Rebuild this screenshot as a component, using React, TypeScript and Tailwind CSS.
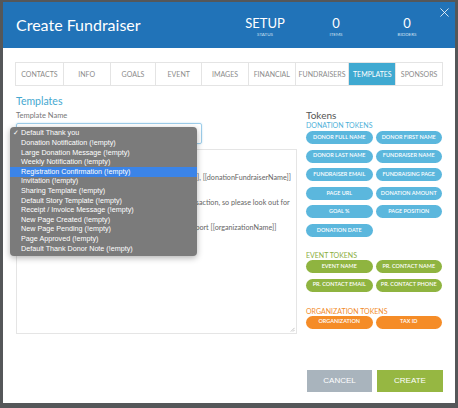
const tabs = [
  { label: "CONTACTS", w: "w-[47px]" },
  { label: "INFO", w: "w-[47px]" },
  { label: "GOALS", w: "w-[46px]" },
  { label: "EVENT", w: "w-[46px]" },
  { label: "IMAGES", w: "w-[47px]" },
  { label: "FINANCIAL", w: "w-[47px]" },
  { label: "FUNDRAISERS", w: "w-[54px]" },
  { label: "TEMPLATES", w: "w-[47px]", active: true },
  { label: "SPONSORS", w: "w-[47px]" },
];

const templates = [
  "Default Thank you",
  "Donation Notification (!empty)",
  "Large Donation Message (!empty)",
  "Weekly Notification (!empty)",
  "Registration Confirmation (!empty)",
  "Invitation (!empty)",
  "Sharing Template (!empty)",
  "Default Story Template (!empty)",
  "Receipt / Invoice Message (!empty)",
  "New Page Created (!empty)",
  "New Page Pending (!empty)",
  "Page Approved (!empty)",
  "Default Thank Donor Note (!empty)",
];

const donationTokens = [
  "DONOR FULL NAME",
  "DONOR FIRST NAME",
  "DONOR LAST NAME",
  "FUNDRAISER NAME",
  "FUNDRAISER EMAIL",
  "FUNDRAISING PAGE",
  "PAGE URL",
  "DONATION AMOUNT",
  "GOAL %",
  "PAGE POSITION",
  "DONATION DATE",
];

const eventTokens = ["EVENT NAME", "PR. CONTACT NAME", "PR. CONTACT EMAIL", "PR. CONTACT PHONE"];
const orgTokens = ["ORGANIZATION", "TAX ID"];

function Stat({ value, label }: { value: string; label: string }) {
  return (
    <div className="w-[50px] flex flex-col items-center">
      <span className="text-[13px] leading-[13px] text-white">{value}</span>
      <span className="mt-[2px] text-[4.5px] leading-[5px] text-[#cfe1f2]">{label}</span>
    </div>
  );
}

function Pill({ label, color }: { label: string; color: string }) {
  return (
    <div
      className={`h-[13px] rounded-full flex items-center justify-center text-[5.5px] leading-none font-semibold text-white whitespace-nowrap ${color}`}
    >
      {label}
    </div>
  );
}

export default function App() {
  return (
    <div className="w-[458px] h-[408px] bg-[#555759] overflow-hidden pt-[2px] pl-[3px] font-['Lato',sans-serif]">
      <div className="relative w-[452px] h-[401px] bg-white flex flex-col">
        {/* Header */}
        <div className="h-[46px] bg-[#2173b8] flex items-center pl-[13px] pr-[23px]">
          <h1 className="flex-1 text-[16px] text-white">Create Fundraiser</h1>
          <div className="flex gap-[21px] pt-[4px]">
            <Stat value="SETUP" label="STATUS" />
            <Stat value="0" label="ITEMS" />
            <Stat value="0" label="BIDDERS" />
          </div>
        </div>
        <svg className="absolute right-[6px] top-[6px] w-[9px] h-[9px]" viewBox="0 0 10 10">
          <path d="M0.5 0.5L9.5 9.5M9.5 0.5L0.5 9.5" stroke="white" strokeWidth="0.9" />
        </svg>

        <div className="flex-1 flex flex-col px-[12px]">
          {/* Tabs */}
          <div className="mt-[14px] flex h-[24px] border border-[#e4e4e4]">
            {tabs.map((t, i) => (
              <div
                key={t.label}
                className={`${t.w} flex items-center justify-center text-[7px] ${i > 0 ? "border-l border-[#e4e4e4]" : ""} ${
                  t.active ? "bg-[#3fa9d1] text-white" : "text-[#8c8c8c]"
                }`}
              >
                {t.label}
              </div>
            ))}
          </div>

          <h2 className="mt-[9px] pl-[1px] text-[10.5px] leading-[12px] text-[#45a8d0]">Templates</h2>

          <div className="mt-[4px] flex gap-[9px] pl-[1px]">
            {/* Left column */}
            <div className="relative w-[281px]">
              <div className="text-[7.5px] leading-[9px] text-[#777]">Template Name</div>
              <div className="mt-[3px] w-[186px] h-[21px] rounded-[2px] border border-[#9dcdea] shadow-[0_0_2px_#bfe0f3]" />
              <div className="relative mt-[5px] h-[185px] border border-[#e5e5e5] pl-[6px] pt-[22px] text-[7.2px] leading-[12.5px] text-[#666] whitespace-nowrap overflow-hidden">
                <p>Thank you all for your kind gift to [[donationPageName]], [[donationFundraiserName]]</p>
                <p>&nbsp;</p>
                <p>You will receive the emailed receipt shortly for this transaction, so please look out for</p>
                <p>&nbsp;</p>
                <p>We are so very grateful for your constant generous support [[organizationName]]</p>
                <svg className="absolute right-[1px] bottom-[1px] w-[5px] h-[5px]" viewBox="0 0 6 6">
                  <path d="M1 5.5L5.5 1M3.5 5.5L5.5 3.5" stroke="#999" strokeWidth="0.7" />
                </svg>
              </div>

              {/* Native select popup */}
              <div className="absolute left-[-6px] top-[16px] w-[187px] rounded-[4px] bg-[#7b7b7b] py-[2px] shadow-[0_2px_6px_rgba(0,0,0,0.3)] font-['Liberation_Sans',Arial,sans-serif] text-[7.2px] text-white">
                {templates.map((t, i) => (
                  <div
                    key={t}
                    className={`h-[9.6px] flex items-center pl-[11px] relative ${i === 4 ? "bg-[#3b84e8]" : ""}`}
                  >
                    {i === 0 && <span className="absolute left-[3px]">✓</span>}
                    {t}
                  </div>
                ))}
              </div>
            </div>

            {/* Right column */}
            <div className="w-[136px] flex flex-col">
              <div className="text-[10px] leading-[10px] text-[#555] -mt-[1px]">Tokens</div>
              <div className="mt-[1px] text-[7px] leading-[8px] text-[#4fb1d9]">DONATION TOKENS</div>
              <div className="mt-[2px] grid grid-cols-2 gap-x-[3px] gap-y-[5.6px]">
                {donationTokens.map((t) => (
                  <Pill key={t} label={t} color="bg-[#5bb7dd]" />
                ))}
              </div>
              <div className="mt-[14px] text-[7px] leading-[8px] text-[#8aad3c]">EVENT TOKENS</div>
              <div className="mt-[1px] grid grid-cols-2 gap-x-[3px] gap-y-[5.6px]">
                {eventTokens.map((t) => (
                  <Pill key={t} label={t} color="bg-[#8fb440]" />
                ))}
              </div>
              <div className="mt-[15px] text-[7px] leading-[8px] text-[#f28c2c]">ORGANIZATION TOKENS</div>
              <div className="mt-[1px] grid grid-cols-2 gap-x-[3px]">
                {orgTokens.map((t) => (
                  <Pill key={t} label={t} color="bg-[#f58c27]" />
                ))}
              </div>
            </div>
          </div>

          {/* Footer */}
          <div className="mt-auto mb-[11px] flex justify-end gap-[5px]">
            <button className="w-[65px] h-[22px] bg-[#a9b4bd] text-white text-[8px] font-['Liberation_Sans',Arial,sans-serif]">
              CANCEL
            </button>
            <button className="w-[66px] h-[22px] bg-[#96b742] text-white text-[8px] font-['Liberation_Sans',Arial,sans-serif]">
              CREATE
            </button>
          </div>
        </div>
      </div>
    </div>
  );
}
